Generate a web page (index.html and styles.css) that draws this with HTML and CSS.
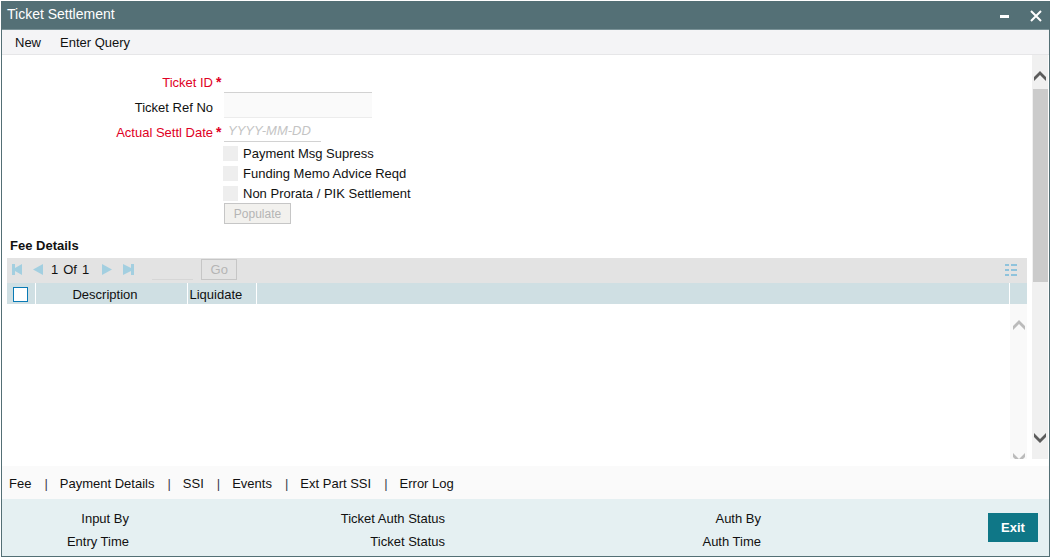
FILE: index.html
```html
<!DOCTYPE html>
<html lang="en">
<head>
    <meta charset="UTF-8">
    <meta name="viewport" content="width=device-width, initial-scale=1.0">
    <title>Ticket Settlement</title>
    <link rel="stylesheet" href="styles.css">
</head>
<body>
    <div class="window">
        <header class="title-bar">
            <h1>Ticket Settlement</h1>
            <button type="button" class="window-button" aria-label="Minimize">
                <svg width="12" height="12" viewBox="0 0 12 12"><path d="M1 6.5H10" stroke="#fff" stroke-width="3"/></svg>
            </button>
            <button type="button" class="window-button" aria-label="Close">
                <svg width="12" height="12" viewBox="0 0 12 12"><path d="M1 1L11 11M11 1L1 11" stroke="#fff" stroke-width="2"/></svg>
            </button>
        </header>

        <nav class="menu">
            <button type="button">New</button>
            <button type="button">Enter Query</button>
        </nav>

        <main class="main">
            <div class="content">
                <form class="ticket-form">
                    <div class="row required">
                        <label for="ticketId">Ticket ID</label>
                        <span class="star">*</span>
                        <input type="text" id="ticketId" class="field">
                    </div>
                    <div class="row">
                        <label for="ticketRef">Ticket Ref No</label>
                        <span class="star"></span>
                        <input type="text" id="ticketRef" class="field readonly" readonly>
                    </div>
                    <div class="row required">
                        <label for="settlDate">Actual Settl Date</label>
                        <span class="star">*</span>
                        <input type="text" id="settlDate" class="field date" placeholder="YYYY-MM-DD">
                    </div>
                    <div class="options">
                        <label><input type="checkbox" disabled>Payment Msg Supress</label>
                        <label><input type="checkbox" disabled>Funding Memo Advice Reqd</label>
                        <label><input type="checkbox" disabled>Non Prorata / PIK Settlement</label>
                        <button type="button" class="small-button populate" disabled>Populate</button>
                    </div>
                </form>

                <section class="fees">
                    <h2>Fee Details</h2>
                    <div class="toolbar">
                        <button type="button" class="pager" aria-label="First page">
                            <svg width="11" height="11" viewBox="0 0 11 11"><path d="M0 0H3V4L10 0V11L3 7V11H0Z"/></svg>
                        </button>
                        <button type="button" class="pager" aria-label="Previous page">
                            <svg width="11" height="11" viewBox="0 0 11 11"><path d="M10 0V11L0 5.5Z"/></svg>
                        </button>
                        <span class="count"><span>1</span><span>Of</span><span>1</span></span>
                        <button type="button" class="pager" aria-label="Next page">
                            <svg width="11" height="11" viewBox="0 0 11 11"><path d="M0 0L10 5.5L0 11Z"/></svg>
                        </button>
                        <button type="button" class="pager" aria-label="Last page">
                            <svg width="11" height="11" viewBox="0 0 11 11"><path d="M11 0H8V4L0 0V11L8 7V11H11Z"/></svg>
                        </button>
                        <input type="text" class="page-input" aria-label="Page number">
                        <button type="button" class="small-button go" disabled>Go</button>
                        <button type="button" class="pager list" aria-label="Single record view">
                            <svg width="13" height="12" viewBox="0 0 13 12"><path d="M0 0H4V2H0ZM6 0H12V2H6ZM0 5H4V7H0ZM6 5H12V7H6ZM0 10H4V12H0ZM6 10H12V12H6Z"/></svg>
                        </button>
                    </div>
                    <table class="fee-table">
                        <thead>
                            <tr>
                                <th class="col-check"><input type="checkbox" aria-label="Select all"></th>
                                <th class="col-description">Description</th>
                                <th class="col-liquidate">Liquidate</th>
                                <th></th>
                                <th class="col-scroll"></th>
                            </tr>
                        </thead>
                    </table>
                    <div class="fee-body">
                        <div class="scroll inner">
                            <svg width="12" height="10" viewBox="0 0 12 10"><path d="M0 6L6 0L12 6V10L6 4L0 10Z"/></svg>
                            <svg class="down" width="12" height="6" viewBox="0 0 12 6"><path d="M0 0L6 6L12 0V4L6 10L0 4Z"/></svg>
                        </div>
                    </div>
                </section>
            </div>
            <div class="scroll outer">
                <svg width="12" height="10" viewBox="0 0 12 10"><path d="M0 6L6 0L12 6V10L6 4L0 10Z"/></svg>
                <div class="thumb"></div>
                <svg class="down" width="12" height="10" viewBox="0 0 12 10"><path d="M0 0L6 6L12 0V4L6 10L0 4Z"/></svg>
            </div>
        </main>

        <nav class="tabs">
            <a href="#">Fee</a>
            <a href="#">Payment Details</a>
            <a href="#">SSI</a>
            <a href="#">Events</a>
            <a href="#">Ext Part SSI</a>
            <a href="#">Error Log</a>
        </nav>

        <footer class="footer">
            <div class="audit">
                <span>Input By</span>
                <span>Ticket Auth Status</span>
                <span>Auth By</span>
                <span>Entry Time</span>
                <span>Ticket Status</span>
                <span>Auth Time</span>
            </div>
            <button type="button" class="exit">Exit</button>
        </footer>
    </div>
</body>
</html>
```
FILE: styles.css
```css
* {
    box-sizing: border-box;
}

body {
    margin: 0;
    padding: 1px;
    height: 100vh;
    background: #fff;
    color: #111;
    font-family: "Liberation Sans", Arial, sans-serif;
    font-size: 13px;
}

button,
input {
    font: inherit;
    color: inherit;
    margin: 0;
    padding: 0;
    border: none;
    border-radius: 0;
    background: none;
}

svg {
    display: block;
}

.window {
    display: flex;
    flex-direction: column;
    height: 100%;
    border: 1px solid #536f75;
}

/* title bar */
.title-bar {
    display: flex;
    align-items: center;
    gap: 19px;
    height: 28px;
    padding: 0 7px 0 5px;
    background: #547076;
    border-bottom: 1px solid #7a9297;
    color: #fff;
}

.title-bar h1 {
    flex: 1;
    margin: 0;
    padding-bottom: 3px;
    font-size: 14px;
    font-weight: normal;
}

.menu {
    display: flex;
    gap: 19px;
    height: 25px;
    padding: 0 13px;
    background: #f4f4f6;
    border-bottom: 1px solid #e6e6e8;
}

/* main area */
.main {
    flex: 1;
    display: flex;
    min-height: 0;
    padding: 0 1px 7px 0;
}

.content {
    flex: 1;
    display: flex;
    flex-direction: column;
    padding: 13px 5px 0;
    overflow: hidden;
}

.row {
    display: flex;
    align-items: center;
    height: 25px;
}

.row label {
    width: 206px;
    padding-top: 3px;
    text-align: right;
}

.star {
    width: 11px;
    padding: 3px 0 0 3px;
    font-size: 14px;
    font-weight: bold;
}

.required label,
.star {
    color: #e00024;
}

.field {
    width: 148px;
    height: 25px;
    padding: 0 4px;
    border-bottom: 1px solid #d2d2d2;
}

.field.readonly {
    background: #fafafa;
    border-bottom-color: #ececec;
}

.field.date {
    width: 97px;
    height: 24px;
    padding-top: 2px;
    align-self: flex-start;
}

.field::placeholder {
    color: #c4c4c4;
    font-style: italic;
}

.options {
    display: flex;
    flex-direction: column;
    align-items: flex-start;
    padding-left: 216px;
}

.options label {
    display: flex;
    align-items: center;
    gap: 5px;
    height: 20px;
    padding-top: 1px;
}

.options input {
    appearance: none;
    width: 15px;
    height: 15px;
    background: #eee;
}

.small-button {
    height: 21px;
    border: 1px solid #c6c6c6;
    color: #b5b5b5;
}

.populate {
    width: 67px;
    margin-left: 1px;
    background: #f2f1ee;
    font-size: 12px;
}

/* fee grid */
.fees {
    flex: 1;
    display: flex;
    flex-direction: column;
    min-height: 0;
}

.fees h2 {
    margin: 0;
    padding: 14px 3px 5px;
    font-size: 13px;
    line-height: 15px;
}

.toolbar {
    display: flex;
    align-items: center;
    height: 25px;
    padding: 0 9px 2px 5px;
    background: #e3e3e3;
}

.pager {
    margin-right: 10px;
    fill: #a3cfe0;
}

.count {
    display: flex;
    gap: 5px;
    margin: 0 13px 0 -3px;
}

.page-input {
    width: 41px;
    height: 21px;
    margin: 0 8px;
    border-bottom: 1px solid #d6d6d6;
}

.go {
    width: 36px;
}

.list {
    margin: 0 0 0 auto;
    fill: #8fc3dc;
}

.fee-table {
    width: 100%;
    table-layout: fixed;
    border-collapse: collapse;
    background: #cfdfe3;
}

.fee-table th {
    height: 21px;
    padding: 2px 0 0;
    border-left: 1px solid #fff;
    font-weight: normal;
}

.fee-table .col-check {
    width: 28px;
    border-left: none;
}

.fee-table .col-description {
    width: 152px;
    padding-right: 12px;
}

.fee-table .col-liquidate {
    width: 69px;
    padding-left: 2px;
    text-align: left;
}

.fee-table .col-scroll {
    width: 18px;
}

.col-check input {
    appearance: none;
    display: block;
    width: 15px;
    height: 15px;
    margin: 0 6px;
    background: #fff;
    border: 1px solid #0a7ab5;
}

.fee-body {
    flex: 1;
    display: flex;
    justify-content: flex-end;
    min-height: 0;
}

/* scrollbars */
.scroll {
    display: flex;
    flex-direction: column;
    align-items: center;
    width: 16px;
    background: #f0f0f0;
    fill: #5c5c5c;
}

.scroll .down {
    margin-top: auto;
}

.outer {
    padding: 16px 0;
}

.outer .thumb {
    width: 15px;
    height: 193px;
    margin-top: 8px;
    background: #cbcbcb;
}

.inner {
    width: 17px;
    padding-top: 16px;
    background: #f9f9f9;
    fill: #bbb;
}

/* bottom tabs */
.tabs {
    display: flex;
    align-items: center;
    height: 33px;
    padding: 2px 7px 0;
    background: #fafafa;
}

.tabs a {
    color: inherit;
    text-decoration: none;
}

.tabs a + a::before {
    content: "|";
    margin: 0 12px 0 13px;
    color: #3a3a4c;
}

.footer {
    display: flex;
    height: 57px;
    padding: 8px 11px 0 0;
    background: #e5f0f2;
}

.audit {
    flex: 1;
    display: grid;
    grid-template-columns: repeat(3, 1fr);
    grid-auto-rows: 23px;
    align-items: center;
    margin-right: 38px;
}

.audit span {
    width: 127px;
    text-align: right;
}

.exit {
    width: 50px;
    height: 29px;
    margin-top: 6px;
    background: #0f7787;
    color: #fff;
    font-weight: bold;
}
```
